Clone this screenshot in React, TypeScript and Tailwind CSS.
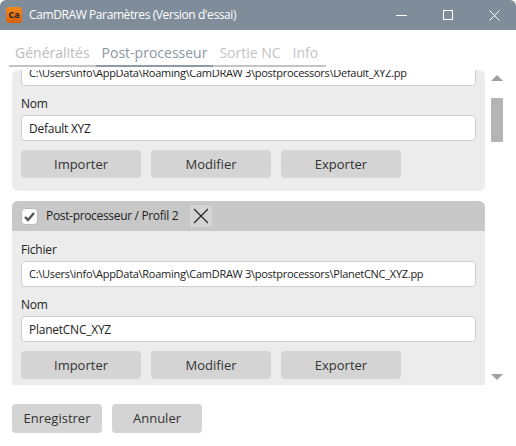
// App.tsx
// CamDRAW settings window - static recreation
const font = "font-['Open_Sans','Noto_Sans',sans-serif]";

function Field({ label, value, path }: { label: string; value: string; path?: boolean }) {
  return (
    <div className="flex flex-col">
      <div className="h-[18px] text-[12px] leading-[20px] text-[#222] mb-[3px] tracking-[-0.2px]">{label}</div>
      <FieldBox value={value} path={path} />
    </div>
  );
}

function FieldBox({ value, path }: { value: string; path?: boolean }) {
  return (
    <div
      className={`h-[26px] bg-white border border-[#cfcfcf] rounded-[4px] px-[7px] pt-[1px] flex items-center whitespace-nowrap overflow-hidden text-[#222] ${path ? 'text-[11px] tracking-[-0.28px]' : 'text-[12px] tracking-[-0.25px]'}`}
    >
      {value}
    </div>
  );
}

function Buttons() {
  return (
    <div className="flex gap-[10px] mt-[9px]">
      {['Importer', 'Modifier', 'Exporter'].map((t) => (
        <button key={t} className="w-[120px] h-[28px] pt-[1px] rounded-[4px] bg-[#d4d4d4] text-[13px] text-[#333]">
          {t}
        </button>
      ))}
    </div>
  );
}

function Header({ title }: { title: string }) {
  return (
    <div className="h-[30px] bg-[#c8c8c8] flex items-center pl-[9px]">
      <div className="w-[17px] h-[17px] bg-white rounded-[4px] border border-[#bdbdbd] flex items-center justify-center">
        <svg width="13" height="13" viewBox="0 0 13 13">
          <path d="M2 7l3 3L11 3" fill="none" stroke="#555" strokeWidth="2.4" />
        </svg>
      </div>
      <span className="ml-[8px] text-[12px] text-[#222] tracking-[-0.33px]">{title}</span>
      <div className="ml-[12px] w-[22px] h-[22px] rounded-[3px] bg-[#d4d4d4] flex items-center justify-center">
        <svg width="16" height="16" viewBox="0 0 16 16">
          <path d="M1 1l14 14M15 1L1 15" stroke="#222" strokeWidth="1.2" />
        </svg>
      </div>
    </div>
  );
}

export default function App() {
  return (
    <div className={`${font} w-[516px] h-[446px] bg-white flex flex-col overflow-hidden`}>
      {/* title bar */}
      <div className="h-[30px] bg-[#7f8c99] flex items-center shrink-0 rounded-t-[6px]">
        <div className="ml-[6px] w-[16px] h-[16px] rounded-[3px] bg-linear-to-b from-[#f08a1c] to-[#d9600a] flex items-center justify-center text-[9px] font-bold text-[#222]">
          Ca
        </div>
        <span className="ml-[7px] text-[12px] text-white tracking-[-0.4px]">CamDRAW Paramètres (Version d'essai)</span>
        <div className="ml-auto flex items-center">
          <div className="w-[11px] h-px bg-white mr-[36px]" />
          <div className="w-[10px] h-[10px] border border-white mr-[36px]" />
          <svg width="11" height="11" viewBox="0 0 11 11" className="mr-[16px]">
            <path d="M0.5 0.5l10 10M10.5 0.5l-10 10" stroke="#fff" strokeWidth="1" />
          </svg>
        </div>
      </div>

      {/* tabs */}
      <div className="mt-[13px] ml-[9px] w-[317px] h-[24px] flex border-b-2 border-[#c4c4c4] shrink-0 text-[14px] leading-[20px] whitespace-nowrap">
        <span className="px-[6px] text-[#bcbcbc]">Généralités</span>
        <span className="px-[6px] text-[#8a96a3] border-b-2 border-[#8f9aa5] h-[24px]">Post-processeur</span>
        <span className="px-[6px] text-[#c4c4c4]">Sortie NC</span>
        <span className="px-[6px] text-[#c4c4c4]">Info</span>
      </div>

      {/* scroll area */}
      <div className="mt-[3px] h-[315px] flex shrink-0">
        <div className="ml-[12px] w-[473px] overflow-hidden">
          {/* profile 1, scrolled so only the end of its file field shows */}
          <div className="bg-[#ececec] rounded-[6px] px-[9px] pb-[13px] flex flex-col">
            <div className="mt-[-10px]">
              <FieldBox value="C:\Users\info\AppData\Roaming\CamDRAW 3\postprocessors\Default_XYZ.pp" path />
            </div>
            <div className="mt-[8px]">
              <Field label="Nom" value="Default XYZ" />
            </div>
            <Buttons />
          </div>
          <div className="bg-[#ececec] rounded-[6px] overflow-hidden mt-[10px]">
            <Header title="Post-processeur / Profil 2" />
            <div className="px-[9px] pt-[9px] pb-[13px] flex flex-col">
              <Field label="Fichier" value="C:\Users\info\AppData\Roaming\CamDRAW 3\postprocessors\PlanetCNC_XYZ.pp" path />
              <div className="mt-[8px]">
                <Field label="Nom" value="PlanetCNC_XYZ" />
              </div>
              <Buttons />
            </div>
          </div>
        </div>
        <div className="ml-[6px] w-[12px] relative">
          <div className="absolute left-0 top-[5px] w-0 h-0 border-x-[6px] border-x-transparent border-b-[6px] border-b-[#a0a0a0]" />
          <div className="absolute left-0 top-[28px] w-[12px] h-[44px] bg-[#b4b4b4]" />
          <div className="absolute left-0 top-[304px] w-0 h-0 border-x-[6px] border-x-transparent border-t-[6px] border-t-[#a0a0a0]" />
        </div>
      </div>

      {/* footer */}
      <div className="mt-[19px] ml-[12px] flex gap-[10px]">
        <button className="w-[90px] h-[29px] pt-[1px] rounded-[4px] bg-[#d4d4d4] text-[13px] text-[#333]">Enregistrer</button>
        <button className="w-[90px] h-[29px] pt-[1px] rounded-[4px] bg-[#d4d4d4] text-[13px] text-[#333]">Annuler</button>
      </div>
    </div>
  );
}
